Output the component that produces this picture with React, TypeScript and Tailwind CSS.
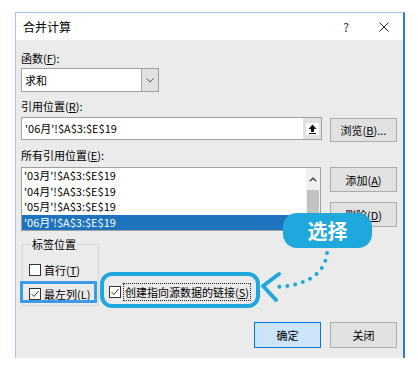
import React from "react";

const refs = ["'03月'!$A$3:$E$19", "'04月'!$A$3:$E$19", "'05月'!$A$3:$E$19", "'06月'!$A$3:$E$19"];

function CheckBox({ checked }: { checked?: boolean }) {
  return (
    <span className="flex h-[12px] w-[12px] shrink-0 items-center justify-center border border-[#333] bg-white">
      {checked && (
        <svg viewBox="0 0 10 10" className="h-[10px] w-[10px]" aria-hidden="true">
          <path d="M1.5 5l2.5 2.5L8.5 2" fill="none" stroke="#333" strokeWidth={1} />
        </svg>
      )}
    </span>
  );
}

function Btn({ children, primary }: { children: React.ReactNode; primary?: boolean }) {
  return (
    <div
      className={
        primary
          ? "flex h-[26px] w-[67px] items-center justify-center border border-[#0078d7] bg-[#cce4f7]"
          : "flex h-[26px] w-[67px] items-center justify-center border border-[#adadad] bg-[#e1e1e1]"
      }
    >
      {children}
    </div>
  );
}

export default function App() {
  return (
    <div className="relative h-[371px] w-[418px] overflow-hidden bg-white font-['Noto_Sans_CJK_SC','Liberation_Sans',sans-serif] text-[11px] leading-[14px] text-black">
      <div className="pl-[15px] pt-[12px]">
        <div className="flex h-[346px] w-[390px] flex-col border-l border-t border-l-[#a9c4e8] border-t-[#a9c4e8] border-r-2 border-r-[#2a7ccb]">
          {/* title bar */}
          <div className="flex h-[27px] items-center bg-white pl-[7px] pr-[14px]">
            <span className="text-[12px]">合并计算</span>
            <span className="ml-auto mr-[30px] text-[12px] text-[#333]">?</span>
            <svg viewBox="0 0 10 10" className="h-[10px] w-[10px]" aria-hidden="true">
              <path d="M0.5 0.5l9 9M9.5 0.5l-9 9" stroke="#222" strokeWidth={1} />
            </svg>
          </div>

          {/* body */}
          <div className="flex flex-1 flex-col bg-[#ebebeb] pl-[5px] pr-[6px] pt-[11px]">
            <div>
              函数(<u>F</u>):
            </div>
            <div className="mt-[3px] flex h-[24px] w-[138px] border border-[#a0a0a0] bg-white">
              <span className="flex-1 pl-[3px] leading-[22px]">求和</span>
              <span className="flex w-[17px] items-center justify-center border-l border-[#a0a0a0] bg-[#e1e1e1]">
                <svg viewBox="0 0 8 5" className="h-[5px] w-[8px]" aria-hidden="true">
                  <path d="M0.5 0.5L4 4l3.5-3.5" fill="none" stroke="#555" strokeWidth={1} />
                </svg>
              </span>
            </div>

            <div className="mt-[7px]">
              引用位置(<u>R</u>):
            </div>
            <div className="mt-[4px] flex items-start gap-[8px]">
              <div className="flex h-[23px] w-[301px] border border-[#a0a0a0] bg-white">
                <span className="flex-1 pl-[3px] leading-[21px]">'06月'!$A$3:$E$19</span>
                <span className="flex w-[18px] items-center justify-center bg-[#e1e1e1]">
                  <span className="flex h-[12px] w-[13px] items-center justify-center bg-white">
                    <svg viewBox="0 0 9 10" className="h-[10px] w-[9px]" aria-hidden="true">
                      <path d="M4.5 0.5L8.5 5H6v3H3V5H0.5z" fill="#111" />
                      <path d="M1 9.5h7" stroke="#111" strokeWidth={1} />
                    </svg>
                  </span>
                </span>
              </div>
              <div className="mt-[1px] flex h-[24px] w-[67px] items-center justify-center border border-[#adadad] bg-[#e1e1e1]">
                浏览(<u>B</u>)...
              </div>
            </div>

            <div className="mt-[6px]">
              所有引用位置(<u>E</u>):
            </div>
            <div className="mt-[5px] flex items-start gap-[9px]">
              <div className="flex h-[64px] w-[300px] border border-[#a0a0a0] bg-white">
                <div className="flex-1 pt-[0px]">
                  {refs.map((r, i) => (
                    <div
                      key={r}
                      className={
                        i === 3
                          ? "h-[15.5px] bg-[#1e73be] pl-[2px] leading-[15.5px] text-white"
                          : "h-[15.5px] pl-[2px] leading-[15.5px]"
                      }
                    >
                      {r}
                    </div>
                  ))}
                </div>
                <div className="flex w-[14px] flex-col bg-[#f0f0f0]">
                  <div className="flex h-[22px] items-center justify-center">
                    <svg viewBox="0 0 8 5" className="h-[5px] w-[8px]" aria-hidden="true">
                      <path d="M0.8 4.3L4 1.2l3.2 3.1" fill="none" stroke="#555" strokeWidth={1.6} />
                    </svg>
                  </div>
                  <div className="mx-auto w-[12px] flex-1 bg-[#c2c2c2]" />
                </div>
              </div>
              <div className="flex flex-col gap-[10px]">
                <div className="flex h-[25px] w-[67px] items-center justify-center border border-[#adadad] bg-[#e1e1e1]">
                  添加(<u>A</u>)
                </div>
                <div className="flex h-[25px] w-[67px] items-center justify-center border border-[#adadad] bg-[#e1e1e1]">
                  删除(<u>D</u>)
                </div>
              </div>
            </div>

            <div className="mt-[6px] flex items-start">
              <fieldset className="ml-[1px] h-[69px] w-[77px] border border-[#d6d6d6] pl-[6px]">
                <legend className="ml-[2px] px-[1px] leading-[14px]">标签位置</legend>
                <div className="mt-[12px] flex items-center gap-[3px]">
                  <CheckBox />
                  <span>
                    首行(<u>T</u>)
                  </span>
                </div>
                <div className="mt-[10px] flex items-center gap-[3px]">
                  <CheckBox checked />
                  <span>
                    最左列(<u>L</u>)
                  </span>
                </div>
              </fieldset>
              <div className="ml-[10px] mt-[46px] flex items-center gap-[2px]">
                <CheckBox checked />
                <span className="border border-dotted border-[#222] px-[1px] leading-[16px]">
                  创建指向源数据的链接(<u>S</u>)
                </span>
              </div>
            </div>

            <div className="mt-[16px] flex justify-end gap-[9px]">
              <Btn primary>确定</Btn>
              <Btn>关闭</Btn>
            </div>
          </div>
        </div>
      </div>

      {/* annotations */}
      <div className="absolute left-[20px] top-[281px] h-[22px] w-[77px] border-[3px] border-[#3b9be8]" />
      <div className="absolute left-[100px] top-[272px] h-[36px] w-[160px] rounded-[12px] border-[4px] border-[#1ea8db]" />
      <div className="absolute left-[283px] top-[213px] flex h-[35px] w-[89px] items-center justify-center rounded-[14px] bg-[#1ea8db] text-[20px] font-bold leading-none text-white">
        选择
      </div>
      <svg className="pointer-events-none absolute left-0 top-0" width="418" height="371" aria-hidden="true">
        <path
          d="M327 253 C325 276 302 287 272 287"
          fill="none"
          stroke="#1ea8db"
          strokeWidth={4}
          strokeLinecap="round"
          strokeDasharray="0 8"
        />
        <path
          d="M279 274 L263 286 L276 300"
          fill="none"
          stroke="#1ea8db"
          strokeWidth={4}
          strokeLinecap="round"
          strokeLinejoin="round"
        />
      </svg>
    </div>
  );
}
